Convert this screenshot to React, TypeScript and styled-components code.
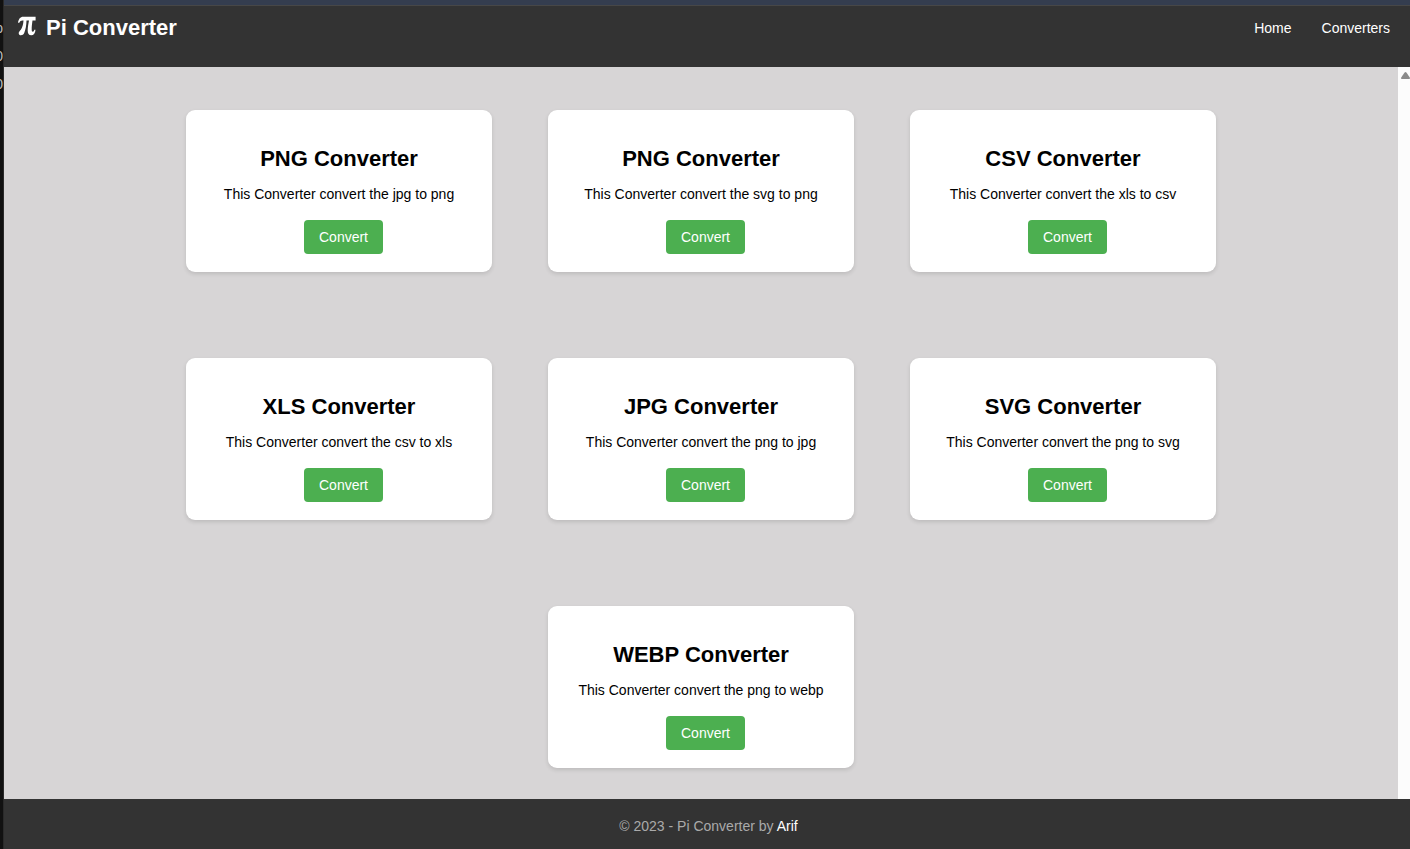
import React from "react";
import styled, { createGlobalStyle } from "styled-components";

const GlobalStyle = createGlobalStyle`
  * { box-sizing: border-box; }
  body {
    margin: 0;
    background: #333333;
    font-family: "Liberation Sans", Arial, sans-serif;
    font-size: 14px;
    line-height: 16px;
    color: #000;
  }
`;

const Shell = styled.div`
  display: flex;
  min-height: 100vh;
`;

const Edge = styled.aside`
  flex: none;
  width: 4px;
  padding-top: 20px;
  overflow: hidden;
  background: #111111;
  border-right: 1px solid #2a2a2a;
  color: #bdbdbd;
  display: flex;
  flex-direction: column;
  gap: 12px;
  align-items: flex-end;
  font-size: 14px;
`;

const Page = styled.div`
  flex: 1;
  min-width: 0;
  display: flex;
  flex-direction: column;
  border-top: 5px solid #343d4f;
`;

const Header = styled.header`
  display: flex;
  justify-content: space-between;
  align-items: flex-start;
  height: 62px;
  padding: 10px 20px 0 14px;
  background: #333333;
  border-top: 1px solid #474747;
  color: #fff;
`;

const Brand = styled.h1`
  display: flex;
  align-items: flex-start;
  gap: 10px;
  margin: 0;
  font-size: 22px;
  line-height: 24px;
`;

const Nav = styled.nav`
  display: flex;
  gap: 30px;
  padding-top: 4px;
`;

const LightLink = styled.a`
  color: #fff;
  text-decoration: none;
`;

const Content = styled.div`
  flex: 1;
  display: flex;
`;

const Main = styled.main`
  flex: 1;
  display: flex;
  flex-wrap: wrap;
  justify-content: center;
  align-content: flex-start;
  gap: 86px 56px;
  padding: 43px 160px 31px;
  background: #d7d5d6;
`;

const ScrollTrack = styled.div`
  display: flex;
  align-items: flex-start;
  flex: none;
  width: 12px;
  padding: 5px 0 0 3px;
  overflow: hidden;
  background: #fcfcfc;
`;

const Card = styled.article`
  display: flex;
  flex-direction: column;
  align-items: center;
  width: 306px;
  padding: 37px 18px 18px;
  border-radius: 9px;
  background: #fff;
  box-shadow: 0 2px 4px rgba(0, 0, 0, 0.12);
`;

const CardTitle = styled.h2`
  margin: 0 0 13px;
  font-size: 22px;
  line-height: 24px;
`;

const CardText = styled.p`
  margin: 0 0 16px;
  line-height: 20px;
  white-space: nowrap;
`;

const ConvertButton = styled.button`
  height: 34px;
  margin-left: 9px;
  padding: 0 15px;
  border: 0;
  border-radius: 4px;
  background: #4caf50;
  color: #fff;
  font: inherit;
  cursor: pointer;
`;

const Footer = styled.footer`
  height: 50px;
  padding: 19px 0 0 3px;
  background: #333333;
  color: #aaaaaa;
  text-align: center;
`;

const converters = [
  { title: "PNG", from: "jpg", to: "png" },
  { title: "PNG", from: "svg", to: "png" },
  { title: "CSV", from: "xls", to: "csv" },
  { title: "XLS", from: "csv", to: "xls" },
  { title: "JPG", from: "png", to: "jpg" },
  { title: "SVG", from: "png", to: "svg" },
  { title: "WEBP", from: "png", to: "webp" },
];

const PiIcon = () => (
  <svg width="18" height="20" viewBox="0 0 18 20" fill="#fff" aria-hidden="true">
    <path d="M0 6.700C.7 3 2.200 .8 5.200 .8H17.600V4.600H14.500C14 8 13.700 11 13.700 13.200C13.700 15 14 15.700 14.800 15.700C15.600 15.700 16.100 15 16.300 13.700H17.500C17.300 17 15.800 19.300 13.300 19.300C10.700 19.300 9.700 17.500 9.700 14.500C9.700 11.500 10.400 8 11 4.600H8.500C8.400 9.500 7.500 14 6.300 16.800C5.500 18.600 4.300 19.300 3 19.300C1.600 19.300 .7 18.400 .7 17.200C.7 15.800 1.800 15 2.800 13.800C4.300 11.800 5.300 8.500 5.500 4.600H4.500C2.900 4.600 2 5.300 1.300 6.700Z" />
  </svg>
);

export default function App() {
  return (
    <>
      <GlobalStyle />
      <Shell>
        <Edge aria-hidden="true">
          <span>p</span>
          <span>0</span>
          <span>0</span>
        </Edge>
        <Page>
          <Header>
            <Brand>
              <PiIcon />
              Pi Converter
            </Brand>
            <Nav>
              <LightLink href="#home">Home</LightLink>
              <LightLink href="#converters">Converters</LightLink>
            </Nav>
          </Header>
          <Content>
            <Main>
              {converters.map(({ title, from, to }) => (
                <Card key={`${from}-${to}`}>
                  <CardTitle>{title} Converter</CardTitle>
                  <CardText>
                    {`This Converter convert the ${from} to ${to}`}
                  </CardText>
                  <ConvertButton type="button">Convert</ConvertButton>
                </Card>
              ))}
            </Main>
            <ScrollTrack aria-hidden="true">
              <svg width="9" height="8" viewBox="0 0 9 8" fill="#8b8b8b">
                <path d="M3.600 .5Q4.500-.5 5.400.5L8.800 5.500Q9.200 7 8 7H1Q-.2 7 .2 5.500Z" />
              </svg>
            </ScrollTrack>
          </Content>
          <Footer>
            © 2023 - Pi Converter by <LightLink href="#arif">Arif</LightLink>
          </Footer>
        </Page>
      </Shell>
    </>
  );
}
